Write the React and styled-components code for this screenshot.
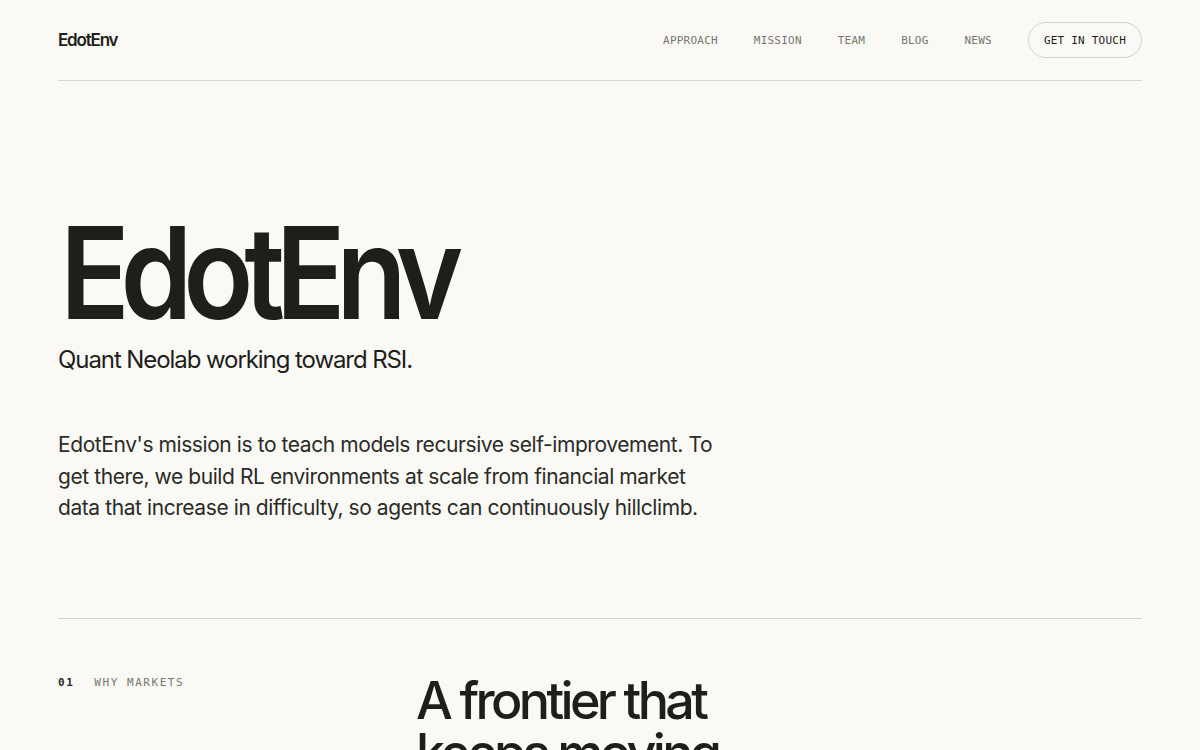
import React from "react";
import styled, { createGlobalStyle } from "styled-components";

const GlobalStyle = createGlobalStyle`
  html, body {
    margin: 0;
    padding: 0;
    background: #faf9f6;
    color: #1e1e1b;
    font-family: Inter, "Liberation Sans", sans-serif;
  }
  * { box-sizing: border-box; }
`;

const Page = styled.div`
  padding: 0 58px;
  min-height: 750px;
  max-height: 750px;
  overflow: hidden;
`;

const Header = styled.header`
  height: 81px;
  display: flex;
  align-items: center;
  justify-content: space-between;
  border-bottom: 1px solid #d6d5d1;
`;

const Logo = styled.div`
  font-size: 17px;
  font-weight: 600;
  letter-spacing: -0.07em;
  color: #1e1e1b;
`;

const Nav = styled.nav`
  display: flex;
  align-items: center;
  gap: 36px;
`;

const NavLink = styled.a`
  font-family: "DejaVu Sans Mono", "Liberation Mono", monospace;
  font-size: 11px;
  letter-spacing: 0.02em;
  color: #77766f;
  text-decoration: none;
`;

const ContactButton = styled.a`
  font-family: "DejaVu Sans Mono", "Liberation Mono", monospace;
  font-size: 11px;
  letter-spacing: 0.02em;
  color: #1e1e1b;
  text-decoration: none;
  height: 36px;
  padding: 0 15px;
  display: flex;
  align-items: center;
  border: 1px solid #d2d1cc;
  border-radius: 18px;
`;

const Hero = styled.section`
  padding: 128px 0 94px;
  border-bottom: 1px solid #d6d5d1;
`;

const Title = styled.h1`
  display: inline-block;
  margin: 0 0 0 2px;
  font-size: 128px;
  line-height: 1;
  font-weight: 600;
  letter-spacing: -0.08em;
  color: #1e1e1b;
  transform: scaleX(0.9);
  transform-origin: left center;
`;

const Tagline = styled.p`
  margin: 8px 0 0;
  font-size: 24px;
  font-weight: 400;
  letter-spacing: -0.045em;
  color: #1e1e1b;
`;

const Mission = styled.p`
  margin: 55px 0 0;
  max-width: 662px;
  font-size: 21px;
  line-height: 31.5px;
  letter-spacing: -0.02em;
  color: #2b2b27;
`;

const Section = styled.section`
  display: grid;
  grid-template-columns: 358px 1fr;
  padding-top: 56px;
`;

const Label = styled.div`
  display: flex;
  gap: 20px;
  padding-top: 1px;
  font-family: "DejaVu Sans Mono", "Liberation Mono", monospace;
  font-size: 11px;
  letter-spacing: 0.14em;
`;

const LabelNum = styled.span`
  color: #2b2b27;
  font-weight: 600;
`;

const LabelText = styled.span`
  color: #77766f;
`;

const Heading = styled.h2`
  margin: 0;
  font-size: 52px;
  line-height: 1;
  font-weight: 500;
  letter-spacing: -0.07em;
  color: #1e1e1b;
`;

export default function App() {
  return (
    <>
      <GlobalStyle />
      <Page>
        <Header>
          <Logo>EdotEnv</Logo>
          <Nav>
            <NavLink href="#">APPROACH</NavLink>
            <NavLink href="#">MISSION</NavLink>
            <NavLink href="#">TEAM</NavLink>
            <NavLink href="#">BLOG</NavLink>
            <NavLink href="#">NEWS</NavLink>
            <ContactButton href="#">GET IN TOUCH</ContactButton>
          </Nav>
        </Header>
        <Hero>
          <Title>EdotEnv</Title>
          <Tagline>Quant Neolab working toward RSI.</Tagline>
          <Mission>
            EdotEnv's mission is to teach models recursive self-improvement. To
            get there, we build RL environments at scale from financial market
            data that increase in difficulty, so agents can continuously
            hillclimb.
          </Mission>
        </Hero>
        <Section>
          <Label>
            <LabelNum>01</LabelNum>
            <LabelText>WHY MARKETS</LabelText>
          </Label>
          <Heading>
            A frontier that
            <br />
            keeps moving
          </Heading>
        </Section>
      </Page>
    </>
  );
}
